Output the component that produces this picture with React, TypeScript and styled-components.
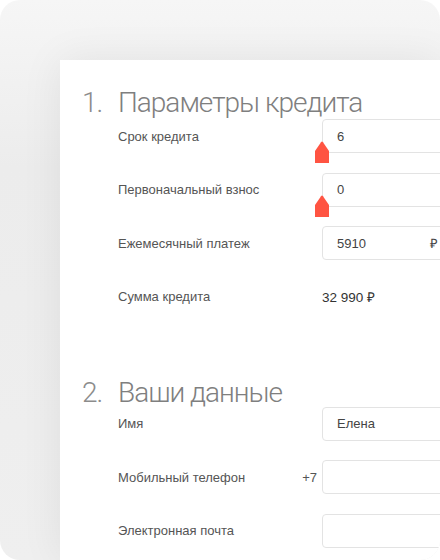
import React from "react";
import styled, { createGlobalStyle } from "styled-components";

const Global = createGlobalStyle`
  html, body { margin: 0; padding: 0; background: #ffffff; }
  body { width: 440px; height: 560px; overflow: hidden; }
`;

const Frame = styled.div`
  width: 440px;
  height: 560px;
  border-radius: 20px;
  overflow: hidden;
  background: linear-gradient(180deg, #f6f6f6 0%, #ececec 30%, #efefef 100%);
  display: flex;
  flex-direction: column;
`;

const Panel = styled.div`
  margin: 60px 0 0 60px;
  flex: 1;
  background: #ffffff;
  box-shadow: 0 0 40px rgba(0, 0, 0, 0.07);
  padding: 27px 0 0 22px;
  display: flex;
  flex-direction: column;
`;

const Section = styled.section<{ $gap?: number }>`
  display: flex;
  flex-direction: column;
  margin-top: ${(p) => p.$gap ?? 0}px;
`;

const Heading = styled.h2<{ $after?: number }>`
  margin: 0 0 ${(p) => p.$after ?? 0}px 0;
  display: flex;
  font-family: Roboto, "Liberation Sans", sans-serif;
  font-weight: 300;
  font-size: 28px;
  letter-spacing: -1px;
  line-height: 32px;
  color: #7f7f7f;
  white-space: nowrap;
`;

const Num = styled.span`
  width: 36px;
  flex: none;
  color: #8c8c8c;
`;

const Rows = styled.div`
  display: flex;
  flex-direction: column;
  gap: 19.5px;
  padding-left: 36px;
`;

const Row = styled.div`
  display: grid;
  grid-template-columns: 204px 300px;
  align-items: center;
  height: 34px;
`;

const Label = styled.div`
  display: flex;
  justify-content: space-between;
  align-items: center;
  padding-right: 5px;
  font-family: "Liberation Sans", Arial, sans-serif;
  font-size: 13px;
  color: #555555;
  white-space: nowrap;
`;

const Prefix = styled.span`
  color: #555555;
`;

const FieldWrap = styled.div`
  position: relative;
  height: 34px;
`;

const Field = styled.div`
  box-sizing: border-box;
  height: 34px;
  width: 300px;
  border: 1px solid #e3e3e3;
  border-radius: 4px;
  padding: 0 14px;
  display: grid;
  grid-template-columns: 93px auto;
  align-items: center;
  font-family: "Liberation Sans", Arial, sans-serif;
  font-size: 13px;
  color: #444444;
  background: #ffffff;
`;

const Suffix = styled.span`
  color: #444444;
`;

const Value = styled.div`
  font-family: "Liberation Sans", Arial, sans-serif;
  font-size: 13.5px;
  color: #333333;
`;

const Thumb = styled.svg`
  position: absolute;
  left: -7px;
  top: 22px;
  width: 14px;
  height: 22px;
`;

const SliderThumb = () => (
  <Thumb viewBox="0 0 14 22">
    <path d="M0 10 L6 1.2 Q7 0 8 1.2 L14 10 L14 22 L0 22 Z" fill="#ff5442" />
  </Thumb>
);

type Item = {
  label: string;
  value?: string;
  suffix?: string;
  prefix?: string;
  slider?: boolean;
  plain?: boolean;
};

const section1: Item[] = [
  { label: "Срок кредита", value: "6", slider: true },
  { label: "Первоначальный взнос", value: "0", slider: true },
  { label: "Ежемесячный платеж", value: "5910", suffix: "₽" },
  { label: "Сумма кредита", value: "32 990 ₽", plain: true },
];

const section2: Item[] = [
  { label: "Имя", value: "Елена" },
  { label: "Мобильный телефон", value: "", prefix: "+7" },
  { label: "Электронная почта", value: "" },
];

const FormRow = ({ item }: { item: Item }) => (
  <Row>
    <Label>
      <span>{item.label}</span>
      {item.prefix && <Prefix>{item.prefix}</Prefix>}
    </Label>
    {item.plain ? (
      <Value>{item.value}</Value>
    ) : (
      <FieldWrap>
        <Field>
          <span>{item.value}</span>
          {item.suffix && <Suffix>{item.suffix}</Suffix>}
        </Field>
        {item.slider && <SliderThumb />}
      </FieldWrap>
    )}
  </Row>
);

export default function App() {
  return (
    <>
      <Global />
      <Frame>
        <Panel>
          <Section>
            <Heading>
              <Num>1.</Num>
              <span>Параметры кредита</span>
            </Heading>
            <Rows>
              {section1.map((it) => (
                <FormRow key={it.label} item={it} />
              ))}
            </Rows>
          </Section>
          <Section $gap={63}>
            <Heading $after={-2}>
              <Num>2.</Num>
              <span>Ваши данные</span>
            </Heading>
            <Rows>
              {section2.map((it) => (
                <FormRow key={it.label} item={it} />
              ))}
            </Rows>
          </Section>
        </Panel>
      </Frame>
    </>
  );
}
